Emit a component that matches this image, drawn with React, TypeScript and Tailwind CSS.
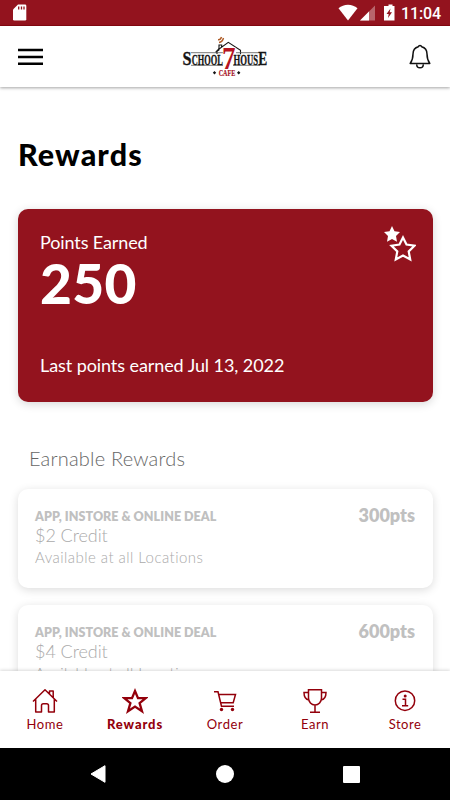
import React from "react";

const deals = [
  { title: "$2 Credit", points: "300pts" },
  { title: "$4 Credit", points: "600pts" },
];

function StatusBar() {
  return (
    <div className="flex h-[26px] shrink-0 items-center justify-between border-b border-[#8a0710] bg-[#93131e] pl-[13px] pr-[9px] text-white">
      <svg width="14" height="17" viewBox="0 0 14 17">
        <path d="M5 .5h7a1.3 1.3 0 0 1 1.3 1.3v13.4a1.3 1.3 0 0 1-1.3 1.3H1.3A1.3 1.3 0 0 1 0 15.200V5.500Z" fill="#fff" />
        <path d="M5.700 2.500v3M8.500 2.500v3M11 2.500v3" stroke="#93131e" strokeWidth="1.300" />
      </svg>
      <div className="flex items-center">
        <svg width="62" height="18" viewBox="0 0 62 18">
          <path d="M0.500 4.200a14.500 14.500 0 0 1 19 0L10 16.500Z" fill="#fff" />
          <path d="M37 1.500v15H22Z" fill="#fff" opacity=".35" />
          <path d="M31 7.500v9H22Z" fill="#fff" />
          <path d="M48.500 2h2V.5h4V2h2v14.500H46V2Z" fill="#fff" />
          <path d="M52.500 4.500 48.500 10h2.200l-.7 4 4-5.700h-2.300Z" fill="#93131e" />
        </svg>
        <span className="w-[41px] pt-[2px] text-right font-['Roboto',sans-serif] text-[16px] font-medium leading-[26px] tracking-[-0.1px]">11:04</span>
      </div>
    </div>
  );
}

function Logo() {
  return (
    <svg width="90" height="50" viewBox="180 30 90 50" fontFamily="'Liberation Serif', serif">
      <path d="M217 52V48.500L228.300 40.300l12.200 8v4M215.500 50.300l3.500-2.300v-5h2.700v3" fill="none" stroke="#151515" strokeWidth="1.100" />
      <path d="M191 50.700h32M236 50.700h24M191 63.300h32M233 63.300h27" stroke="#555" strokeWidth=".8" />
      <path d="M218 37.800q2.500 .3 3.500-2.800M219 40.500q3.500-.5 4.500-4.500" fill="none" stroke="#ae5b26" strokeWidth="1.400" />
      <g fontWeight="bold" fill="#151515">
        <g stroke="#151515" strokeWidth=".35">
          <text x="182.500" y="63" fontSize="19" textLength="9" lengthAdjust="spacingAndGlyphs">S</text>
          <text x="191.800" y="62.500" fontSize="15" textLength="31" lengthAdjust="spacingAndGlyphs">CHOOL</text>
          <text x="233.500" y="62.500" fontSize="15" textLength="24.500" lengthAdjust="spacingAndGlyphs">HOUS</text>
          <text x="258.200" y="63" fontSize="19" textLength="9" lengthAdjust="spacingAndGlyphs">E</text>
        </g>
        <text x="222" y="66.500" fontSize="31" fill="#b51321" stroke="#fff" strokeWidth="1" paintOrder="stroke" textLength="13.500" lengthAdjust="spacingAndGlyphs">7</text>
        <text x="218.700" y="73.500" fontSize="9" fill="#a5101d" stroke="#a5101d" strokeWidth=".2" textLength="16.500" lengthAdjust="spacingAndGlyphs">CAFE</text>
      </g>
      <path d="m214.500 69 1.700 1.700-1.700 1.700-1.700-1.700ZM238.700 69l1.700 1.700-1.700 1.700-1.700-1.700Z" fill="#151515" />
    </svg>
  );
}

function Header() {
  return (
    <header className="z-10 flex h-[61px] shrink-0 items-center justify-between bg-white pl-[18px] pr-[19px] shadow-[0_1px_3px_rgba(0,0,0,0.36)]">
      <svg width="25" height="18" viewBox="0 0 25 18" className="mr-[-3px]">
        <path d="M0 2h25M0 9h25M0 15.700h25" stroke="#000" strokeWidth="2.600" />
      </svg>
      <Logo />
      <svg width="22" height="26" viewBox="0 0 22 26" fill="none" stroke="#111" strokeWidth="1.500" strokeLinejoin="round">
        <path d="M9.300 2.700a1.800 1.800 0 0 1 3.400 0C16 3.600 18 6.500 18 10c0 5 .8 6.700 2.800 9.500H1.200C3.200 16.700 4 15 4 10c0-3.500 2-6.400 5.300-7.300ZM7.700 20.500a3.300 3.300 0 0 0 6.600 0" />
      </svg>
    </header>
  );
}

function PointsCard() {
  return (
    <section className="flex h-[193px] shrink-0 justify-between rounded-[10px] bg-[#93131e] pl-[22px] pr-[17px] text-white shadow-[0_2px_10px_rgba(0,0,0,0.16)]">
      <div className="flex flex-col pt-[21px]">
        <div className="text-[18px] leading-[24px] tracking-[-0.12px]">Points Earned</div>
        <div className="mt-[-1px] text-[55px] font-black leading-[60px] tracking-[0.3px]">250</div>
        <div className="mt-[40px] text-[18px] leading-[24px] tracking-[-0.08px]">Last points earned Jul 13, 2022</div>
      </div>
      <svg width="32" height="36" viewBox="0 0 32 36" className="mt-[17px]">
        <path d="m8 0 2.500 5.300 5.500.8-4 4 1 5.700-5-2.700-5 2.700 1-5.700-4-4 5.500-.8Z" fill="#fff" />
        <path d="m19 11.500 3.500 7 8 1.200-5.800 5.700 1.500 8-7.200-3.800-7.200 3.800 1.500-8-5.800-5.700 8-1.200Z" fill="none" stroke="#fff" strokeWidth="2.200" />
      </svg>
    </section>
  );
}

function DealCard({ title, points }: { title: string; points: string }) {
  return (
    <article className="flex h-[99px] shrink-0 justify-between rounded-[10px] bg-white pl-[17px] pr-[18px] shadow-[0_2px_10px_rgba(0,0,0,0.14)]">
      <div className="flex flex-col pt-[19px] text-[#aaa]">
        <div className="text-[12.5px] font-extrabold leading-[18px] tracking-[0.04px] text-[#c0c0c0]">APP, INSTORE &amp; ONLINE DEAL</div>
        <div className="mt-[-1px] text-[18px] font-light leading-[20px] tracking-[-0.05px]">{title}</div>
        <div className="mt-[1px] text-[15px] font-light leading-[22px] tracking-[0.45px]">Available at all Locations</div>
      </div>
      <div className="pt-[14px] text-[18px] font-extrabold leading-[24px] text-[#c0c0c0]">{points}</div>
    </article>
  );
}

const icon = { fill: "none", stroke: "#93000b", strokeWidth: 1.5 } as const;

const tabs = [
  {
    label: "Home",
    style: "tracking-[0.6px]",
    icon: (
      <svg width="26" height="26" viewBox="0 0 26 26" {...icon} strokeLinejoin="round">
        <path d="M1 13.500 13 1.800l12 11.700M3.700 11v13h5.800v-6.500q0-1.800 1.800-1.800h3.400q1.800 0 1.800 1.800V24h5.800V11M17.500 6V3h3.700v6.500" />
      </svg>
    ),
  },
  {
    label: "Rewards",
    style: "font-black tracking-[0.9px]",
    icon: (
      <svg width="26" height="26" viewBox="0 0 26 26" {...icon} strokeWidth={2.3}>
        <path d="m13 3 3 7.200h7.700l-6.100 5 2.400 8L13 18.600l-7 4.600 2.400-8-6.100-5H10Z" />
      </svg>
    ),
  },
  {
    label: "Order",
    style: "tracking-[0.6px]",
    icon: (
      <svg width="26" height="26" viewBox="0 0 26 26" {...icon}>
        <path d="M2 3.700h4l3.500 14.500H22M6.800 6.500h16.700l-2.300 8.200H8.700" />
        <circle cx="9.500" cy="21.500" r="1.700" fill="#93000b" stroke="none" />
        <circle cx="20.500" cy="21.500" r="1.700" fill="#93000b" stroke="none" />
      </svg>
    ),
  },
  {
    label: "Earn",
    style: "tracking-[0.5px]",
    icon: (
      <svg width="26" height="26" viewBox="0 0 26 26" {...icon}>
        <path d="M6.500 1.800h13V10a6.500 7 0 0 1-13 0ZM6.500 4.500H2c0 5 1.500 7 5 7.500M19.500 4.500H24c0 5-1.500 7-5 7.500M13 17v7M8 24.200h10" />
      </svg>
    ),
  },
  {
    label: "Store",
    style: "tracking-[0.5px]",
    icon: (
      <svg width="26" height="26" viewBox="0 0 26 26" {...icon}>
        <circle cx="13" cy="12.700" r="9.700" />
        <path d="M10.500 11.200h3v6.500M10 17.800h6.200" />
        <circle cx="13.200" cy="8" r="1.500" fill="#93000b" stroke="none" />
      </svg>
    ),
  },
];

function TabBar() {
  return (
    <nav className="z-10 grid h-[77px] shrink-0 grid-cols-5 bg-white shadow-[0_-1px_3px_rgba(0,0,0,0.15)]">
      {tabs.map((tab) => (
        <div key={tab.label} className="flex flex-col items-center pt-[17px] text-[#93000b]">
          {tab.icon}
          <span className={`pt-[1px] text-[13px] leading-[19px] ${tab.style}`}>{tab.label}</span>
        </div>
      ))}
    </nav>
  );
}

function SystemNav() {
  return (
    <div className="flex h-[52px] shrink-0 items-center justify-between bg-black pl-[90px] pr-[90px]">
      <svg width="16" height="18" viewBox="0 0 16 18"><path d="M15 .7v16.600L1 9Z" fill="#fff" stroke="#fff" strokeLinejoin="round" /></svg>
      <div className="size-[18px] rounded-full bg-white" />
      <div className="size-[17px] rounded-[1px] bg-white" />
    </div>
  );
}

export default function App() {
  return (
    <div className="flex h-[800px] w-[450px] flex-col overflow-hidden bg-white font-['Lato',sans-serif]">
      <StatusBar />
      <Header />
      <main className="flex min-h-0 flex-1 flex-col overflow-hidden pl-[18px] pr-[17px] pt-[47px]">
        <h1 className="shrink-0 text-[30.5px] font-black leading-[40px] tracking-[1.1px] text-black">Rewards</h1>
        <div className="h-[35px] shrink-0" />
        <PointsCard />
        <h2 className="mb-[16px] ml-[11px] mt-[42px] shrink-0 text-[20px] font-light leading-[29px] tracking-[0.2px] text-[#666]">Earnable Rewards</h2>
        <div className="flex shrink-0 flex-col gap-[17px]">
          {deals.map((deal) => <DealCard key={deal.points} {...deal} />)}
        </div>
      </main>
      <TabBar />
      <SystemNav />
    </div>
  );
}
